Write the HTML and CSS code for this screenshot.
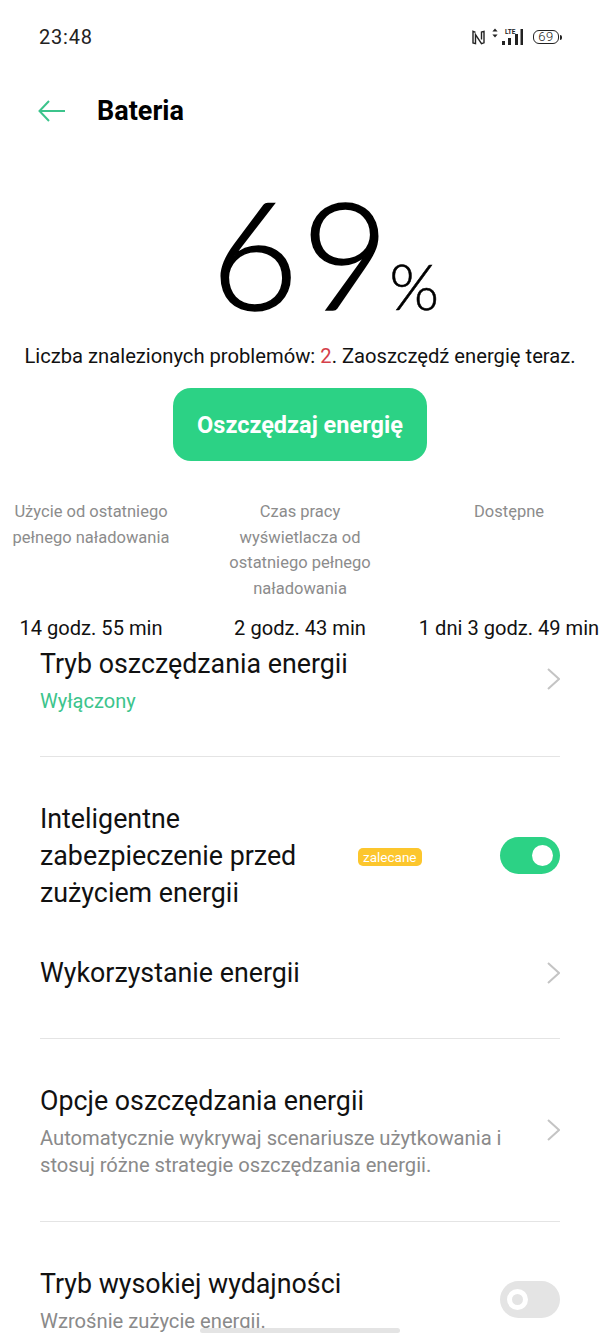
FILE: index.html
```html
<!DOCTYPE html>
<html lang="pl">
<head>
    <meta charset="UTF-8">
    <meta name="viewport" content="width=device-width, initial-scale=1.0">
    <title>Bateria</title>
    <link rel="stylesheet" href="styles.css">
</head>
<body>
    <div class="phone">
        <div class="status-bar">
            <span class="clock">23:48</span>
            <div class="status-icons">
                <svg class="icon-nfc" width="13" height="15" viewBox="0 0 13 15" fill="none" stroke="#222" stroke-width="1.4">
                    <path d="M3.5 2.4 L1 1.4 V13 L3.5 13.6 V4.6 L9.5 13.6 L12 12.8 V1.4 L9.5 2 V9.5" />
                </svg>
                <svg class="icon-wifi" width="6" height="10" viewBox="0 0 6 10" fill="#222">
                    <path d="M3 0.5 L5.6 3.5 H0.4 Z" />
                    <path d="M3 9.5 L5.6 6.5 H0.4 Z" />
                </svg>
                <div class="signal">
                    <span class="lte">LTE</span>
                    <svg width="21" height="16" viewBox="0 0 21 16" fill="#222">
                        <rect x="0" y="12" width="3" height="4" />
                        <rect x="6" y="9" width="3" height="7" />
                        <rect x="13" y="5" width="3" height="11" />
                        <rect x="18.5" y="0" width="2.5" height="16" />
                    </svg>
                </div>
                <div class="battery">
                    <div class="battery-body">69</div>
                    <div class="battery-tip"></div>
                </div>
            </div>
        </div>

        <div class="top-bar">
            <svg class="back" width="28" height="22" viewBox="0 0 28 22" fill="none" stroke="#3cc48c" stroke-width="2">
                <path d="M11 1 L1.5 11 L11 21 M1.5 11 H27" />
            </svg>
            <h1>Bateria</h1>
        </div>

        <div class="level">
            <span class="level-num"><span class="level-first">6</span>9</span><span class="level-pct">%</span>
        </div>
        <p class="summary">Liczba znalezionych problemów: <span class="red">2</span>. Zaoszczędź energię teraz.</p>
        <button class="save-btn">Oszczędzaj energię</button>

        <div class="stats">
            <div class="stat">
                <div class="stat-label">Użycie od ostatniego pełnego naładowania</div>
                <div class="stat-value">14 godz. 55 min</div>
            </div>
            <div class="stat">
                <div class="stat-label">Czas pracy wyświetlacza od ostatniego pełnego naładowania</div>
                <div class="stat-value">2 godz. 43 min</div>
            </div>
            <div class="stat">
                <div class="stat-label">Dostępne</div>
                <div class="stat-value">1 dni 3 godz. 49 min</div>
            </div>
        </div>

        <div class="settings">
            <div class="row row-mode">
                <div class="row-text">
                    <div class="row-title">Tryb oszczędzania energii</div>
                    <div class="row-status">Wyłączony</div>
                </div>
                <svg class="chevron" width="13" height="22" viewBox="0 0 13 22" fill="none" stroke="#c4c4c4" stroke-width="2"><path d="M1 1 L12 11 L1 21" /></svg>
            </div>
            <div class="divider"></div>
            <div class="row row-smart">
                <div class="row-title smart-title">Inteligentne zabezpieczenie przed zużyciem energii</div>
                <span class="tag">zalecane</span>
                <div class="switch switch-on"><span class="knob"></span></div>
            </div>
            <div class="row row-usage">
                <div class="row-title">Wykorzystanie energii</div>
                <svg class="chevron" width="13" height="22" viewBox="0 0 13 22" fill="none" stroke="#c4c4c4" stroke-width="2"><path d="M1 1 L12 11 L1 21" /></svg>
            </div>
            <div class="divider"></div>
            <div class="row row-options">
                <div class="row-text">
                    <div class="row-title">Opcje oszczędzania energii</div>
                    <div class="row-desc">Automatycznie wykrywaj scenariusze użytkowania i stosuj różne strategie oszczędzania energii.</div>
                </div>
                <svg class="chevron" width="13" height="22" viewBox="0 0 13 22" fill="none" stroke="#c4c4c4" stroke-width="2"><path d="M1 1 L12 11 L1 21" /></svg>
            </div>
            <div class="divider"></div>
            <div class="row row-perf">
                <div class="row-text">
                    <div class="row-title">Tryb wysokiej wydajności</div>
                    <div class="row-desc">Wzrośnie zużycie energii.</div>
                </div>
                <div class="switch switch-off"><span class="knob"></span></div>
            </div>
        </div>
        <div class="home-bar"></div>
    </div>
</body>
</html>
```

FILE: styles.css
```css
body {
    margin: 0;
    background-color: #fff;
    font-family: Roboto, sans-serif;
    color: #000;
}

.phone {
    position: relative;
    width: 600px;
    height: 1333px;
    overflow: hidden;
}

.status-bar {
    display: flex;
    justify-content: space-between;
    align-items: center;
    height: 28px;
    padding: 23px 38px 0 39px;
}

.clock {
    font-size: 20px;
    letter-spacing: 0.8px;
    color: #222;
}

.status-icons {
    display: flex;
    align-items: center;
}

.icon-wifi {
    margin: 0 0 8px 7px;
}

.signal {
    position: relative;
    margin-left: 4px;
}

.signal svg {
    display: block;
}

.lte {
    position: absolute;
    top: 0;
    left: 3px;
    font-size: 6.5px;
    line-height: 6px;
    font-weight: 700;
    color: #222;
}

.battery {
    display: flex;
    align-items: center;
    margin-left: 10px;
}

.battery-body {
    box-sizing: border-box;
    width: 26px;
    height: 14px;
    border: 1.5px solid #222;
    border-radius: 6px;
    font-size: 13px;
    font-weight: 300;
    line-height: 11px;
    letter-spacing: 0.5px;
    text-align: center;
    color: #222;
}

.battery-tip {
    width: 2px;
    height: 5px;
    margin-left: 1px;
    background-color: #222;
    border-radius: 0 2px 2px 0;
}

.top-bar {
    display: flex;
    align-items: center;
    height: 40px;
    padding: 40px 0 0 38px;
}

.top-bar h1 {
    margin: 0 0 0 31px;
    font-size: 27px;
    font-weight: 700;
}

.level {
    display: flex;
    justify-content: center;
    align-items: baseline;
    height: 160px;
    margin-top: 41px;
    padding-left: 50px;
    font-family: Lato, sans-serif;
    font-weight: 300;
    line-height: 160px;
}

.level-num {
    font-size: 151px;
    -webkit-text-stroke: 1.6px #000;
}

.level-first {
    letter-spacing: 3px;
}

.level-pct {
    font-size: 64px;
    -webkit-text-stroke: 0.5px #000;
}

.summary {
    margin: 11px 0 0;
    font-size: 20.2px;
    line-height: 26px;
    text-align: center;
    color: #111;
}

.red {
    color: #d5404a;
}

.save-btn {
    display: block;
    width: 254px;
    height: 73px;
    margin: 19px auto 0;
    background-color: #2cd285;
    color: #fff;
    border: none;
    border-radius: 18px;
    font-family: Roboto, sans-serif;
    font-size: 23.5px;
    font-weight: 700;
}

.stats {
    display: grid;
    grid-template-columns: repeat(3, 182px);
    column-gap: 27px;
    margin-top: 38px;
}

.stat {
    display: flex;
    flex-direction: column;
    align-items: center;
    text-align: center;
}

.stat-label {
    width: 165px;
    height: 102px;
    font-size: 16.5px;
    line-height: 25.5px;
    color: #8c8c8c;
}

.stat-value {
    margin-top: 15px;
    font-size: 20.1px;
    line-height: 24px;
    white-space: nowrap;
    color: #111;
}

.settings {
    padding: 0 40px;
}

.row {
    display: flex;
    align-items: center;
    justify-content: space-between;
}

.row-title {
    font-size: 26.8px;
    line-height: 37px;
    color: #111;
}

.row-status {
    margin-top: 5.5px;
    font-size: 20px;
    line-height: 26px;
    color: #3cc48c;
}

.row-desc {
    margin-top: 5px;
    font-size: 20.2px;
    line-height: 27px;
    color: #8a8a8a;
}

.chevron {
    flex-shrink: 0;
    margin-bottom: 1px;
}

.divider {
    height: 1px;
    background-color: #e4e4e4;
}

.row-mode {
    padding: 5.5px 0 42px;
}

.row-smart {
    padding-top: 44px;
}

.smart-title {
    width: 290px;
}

.tag {
    margin-left: 28px;
    padding: 0 5px;
    height: 18px;
    line-height: 18px;
    background-color: #fcc62d;
    color: #fff;
    border-radius: 5px;
    font-size: 13.5px;
}

.switch {
    display: flex;
    align-items: center;
    width: 60px;
    height: 37px;
    margin-left: auto;
    margin-bottom: 3px;
    border-radius: 19px;
    box-sizing: border-box;
}

.switch-on {
    justify-content: flex-end;
    padding-right: 7px;
    background-color: #2cd285;
}

.switch-on .knob {
    width: 21px;
    height: 21px;
    background-color: #fff;
    border-radius: 50%;
}

.switch-off {
    padding-left: 7px;
    background-color: #e4e4e4;
}

.switch-off .knob {
    width: 11px;
    height: 11px;
    border: 5px solid #fff;
    border-radius: 50%;
}

.row-usage {
    padding: 43px 0 45.5px;
}

.row-options {
    padding: 44px 0 42.5px;
}

.row-options .row-text {
    width: 480px;
}

.row-perf {
    padding-top: 44px;
}

.home-bar {
    position: absolute;
    left: 200px;
    bottom: 0;
    width: 200px;
    height: 5px;
    background-color: #e4e4e4;
    border-radius: 3px;
}
```
